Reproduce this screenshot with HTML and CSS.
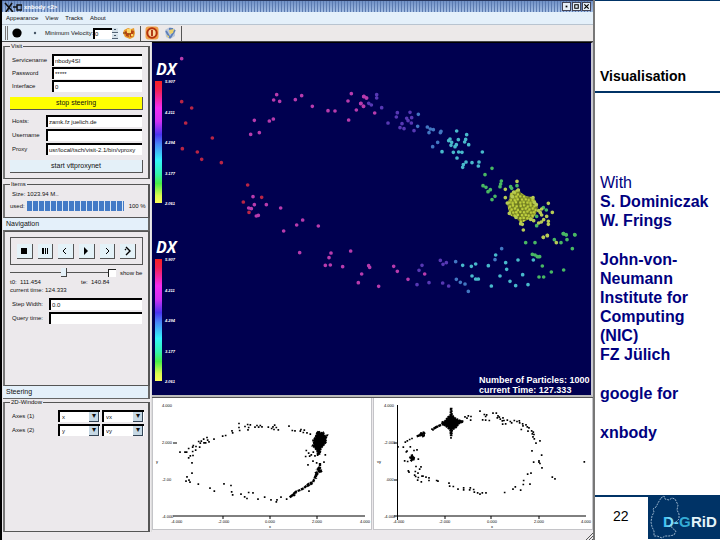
FILE: index.html
```html
<!DOCTYPE html>
<html lang="en">
<head>
<meta charset="utf-8">
<title>Visualisation</title>
<link rel="stylesheet" href="styles.css">
</head>
<body>
<div class="page">
<main class="app">
  <header class="titlebar">
    <svg class="title-icon" viewBox="0 0 18 10"><path d="M1 1L9 10M8 1L2 10" stroke="#111" stroke-width="1.6"/><path d="M9 5h4M13 3h5v5h-5z" stroke="#111" stroke-width="1.4" fill="none"/></svg>
    <h1 class="title">xnbody &lt;2&gt;</h1>
    <div class="win-buttons">
      <button type="button" aria-label="Minimise"><svg viewBox="0 0 8 8"><path d="M3 3h2v2H3z"/></svg></button>
      <button type="button" aria-label="Maximise"><svg viewBox="0 0 8 8"><path d="M2 2h4v4H2z" fill="none" stroke="#000" stroke-width="1.2"/></svg></button>
      <button type="button" aria-label="Close"><svg viewBox="0 0 8 8"><path d="M1.500 1.500l5 5M6.500 1.500l-5 5" stroke="#000" stroke-width="1.400"/></svg></button>
    </div>
  </header>
  <nav class="menubar"><a href="#">Appearance</a><a href="#">View</a><a href="#">Tracks</a><a href="#">About</a></nav>
  <div class="toolbar">
    <span class="grip"></span>
    <button type="button" class="tool" aria-label="Large points"><svg viewBox="0 0 14 14"><circle cx="7" cy="7" r="4.600"/></svg></button>
    <button type="button" class="tool dot" aria-label="Small points"><svg viewBox="0 0 14 14"><circle cx="7" cy="7" r="1.200" fill="#456"/></svg></button>
    <label for="vel">Minimum Velocity:</label>
    <input id="vel" class="spin" value="0">
    <span class="spinner"><i></i><i></i></span>
    <button type="button" class="tool" aria-label="Colours"><svg viewBox="0 0 14 14"><path d="M2 4l4-2 3 1 3-1 1 5-1 4-4 2-5-2-2-4z" fill="#e79a2c"/><path d="M3 5l3 1 1 5-3-1zM8 4l4 1-1 5-3 1z" fill="#b84312"/><path d="M5 3h4v4H5zM9 8h2v2H9z" fill="#fbd768"/><path d="M1 7h3M6 8h2" stroke="#70300c"/></svg></button>
    <span class="sep"></span>
    <button type="button" class="tool" aria-label="Power"><svg viewBox="0 0 14 14"><rect x="0.500" y="0.500" width="13" height="13" rx="3" fill="#efa24a"/><circle cx="7" cy="7" r="4.700" fill="#fbd8a0" stroke="#b5320d" stroke-width="2"/><path d="M7 4v6" stroke="#a92c0b" stroke-width="1.800"/></svg></button>
    <button type="button" class="tool" aria-label="Plot settings"><svg viewBox="0 0 14 14"><path d="M2 4l5-3 5 2v7l-5 3-4-2z" fill="#bac7dc"/><path d="M3 5l4 7M12 4l-5 8M6 3h4" stroke="#5d7fb8" stroke-width="1.800"/><path d="M6 4l5-1-1 4-3 1zM3 9l3 1v2z" fill="#ead06a"/></svg></button>
    <span class="sep"></span>
  </div>
  <div class="workspace">
    <aside class="side">
      <fieldset class="group visit">
        <legend>Visit</legend>
        <div class="row wide"><label for="svc">Servicename</label><input id="svc" value="nbody4SI"></div>
        <div class="row wide"><label for="pwd">Password</label><input id="pwd" value="*****"></div>
        <div class="row wide"><label for="ifc">Interface</label><input id="ifc" value="0"></div>
        <button type="button" class="action stop">stop steering</button>
        <div class="row"><label for="host">Hosts:</label><input id="host" value="zamk.fz juelich.de"></div>
        <div class="row"><label for="user">Username</label><input id="user" value=""></div>
        <div class="row"><label for="prox">Proxy</label><input id="prox" value="usr/local/tsch/visit-2.1/bin/vproxy"></div>
        <button type="button" class="action">start vttproxynet</button>
      </fieldset>
      <fieldset class="group items">
        <legend>Items</legend>
        <p>Size: 1023.94 M..</p>
        <div class="usage"><span>used:</span><span class="bar"></span><span>100 %</span></div>
      </fieldset>
      <h2 class="section">Navigation</h2>
      <section class="group navigation">
        <div class="player">
          <button type="button" aria-label="Stop"><svg viewBox="0 0 14 14"><path d="M4 4h6v6H4z"/></svg></button>
          <button type="button" aria-label="Pause"><svg viewBox="0 0 14 14"><path d="M4 4h2v6H4zM7 4h1v6H7zM9 4h1v6H9z"/></svg></button>
          <button type="button" aria-label="Back"><svg viewBox="0 0 14 14"><path d="M8 4L5 7l3 3" fill="none" stroke="#000"/></svg></button>
          <button type="button" aria-label="Play"><svg viewBox="0 0 14 14"><path d="M5 3l4 4-4 4z"/></svg></button>
          <button type="button" aria-label="Forward"><svg viewBox="0 0 14 14"><path d="M6 4l3 3-3 3" fill="none" stroke="#000"/></svg></button>
          <button type="button" aria-label="End"><svg viewBox="0 0 14 14"><path d="M6 3l4 4-4 4M5 5l1 1" fill="none" stroke="#000" stroke-width="1.400"/></svg></button>
        </div>
        <div class="slide-row"><input type="range" aria-label="Time" min="0" max="100" value="55"><input type="checkbox" id="be"><label for="be">show be</label></div>
        <div class="times"><span>t0:&nbsp; 111.454</span><span>te:&nbsp; 140.84</span></div>
        <p class="current">current time: 124.333</p>
        <div class="row"><label for="step">Step Width:</label><input id="step" value="0.0"></div>
        <div class="row"><label for="query">Query time:</label><input id="query" value=""></div>
      </section>
      <h2 class="section">Steering</h2>
      <fieldset class="group window2d">
        <legend>2D-Window</legend>
        <div class="axes"><label for="ax1">Axes (1)</label><span class="pick"><select id="ax1"><option>x</option></select></span><span class="pick"><select aria-label="Axes 1 second"><option>vx</option></select></span></div>
        <div class="axes"><label for="ax2">Axes (2)</label><span class="pick"><select id="ax2"><option>y</option></select></span><span class="pick"><select aria-label="Axes 2 second"><option>vy</option></select></span></div>
      </fieldset>
    </aside>
    <div class="views">
      <svg class="space" viewBox="152 44 439 352" role="img" aria-label="Particles">
        <defs>
          <linearGradient id="scale" x1="0" y1="0" x2="0" y2="1"><stop offset="0" stop-color="#f82020"/><stop offset=".07" stop-color="#f02050"/><stop offset=".22" stop-color="#f42cf0"/><stop offset=".33" stop-color="#d030f4"/><stop offset=".44" stop-color="#4a34f0"/><stop offset=".52" stop-color="#4888f8"/><stop offset=".65" stop-color="#34f4fa"/><stop offset=".76" stop-color="#34f4b0"/><stop offset=".84" stop-color="#48ee48"/><stop offset=".94" stop-color="#dcfa50"/><stop offset="1" stop-color="#fafc58"/></linearGradient>
          <pattern id="grain" width="53" height="47" patternUnits="userSpaceOnUse"><path fill="#6c7820" d="M0 0h53v47H0z"/><path d="M5 5h.1M15 3h.1M26 7h.1M35 4h.1M46 6h.1M10 14h.1M20 13h.1M31 16h.1M41 13h.1M50 17h.1M4 23h.1M15 24h.1M25 22h.1M36 25h.1M45 24h.1M9 33h.1M20 32h.1M29 34h.1M40 34h.1M49 32h.1M4 42h.1M14 41h.1M25 42h.1M34 43h.1M44 41h.1" stroke="#c2d23e" stroke-width="8" stroke-linecap="round"/></pattern>
        </defs>
        <path fill="#000050" d="M152 44h440v352H152z"/>
        <text class="dx" x="156" y="76">DX</text><text class="dx" x="156" y="254">DX</text>
        <path fill="url(#scale)" d="M155 82h7v122h-7z"/><path fill="url(#scale)" d="M155 260h7v122h-7z"/>
        <g class="tick"><text x="165" y="84">5.907</text><text x="165" y="115">4.211</text><text x="165" y="145">4.294</text><text x="165" y="176">3.177</text><text x="165" y="206">2.061</text><text x="165" y="262">5.907</text><text x="165" y="293">4.211</text><text x="165" y="323">4.294</text><text x="165" y="354">3.177</text><text x="165" y="384">2.061</text></g>
        <g class="dots" transform="translate(150 40) scale(.3333)">
          <path class="red" d="M95 188h.1M125 207h.1M107 252h.1M187 297h.1M142 339h.1M155 361h.1M214 371h.1M97 329h.1M293 438h.1M280 489h.1M297 520h.1M335 475h.1"/>
          <path class="pink" d="M95 59h.1M313 244h.1M302 286h.1M328 281h.1M358 246h.1M370 240h.1M371 183h.1M389 187h.1M380 167h.1M436 182h.1M455 170h.1M487 202h.1M534 215h.1M555 216h.1M309 473h.1M313 497h.1M296 507h.1M304 509h.1M349 497h.1M392 507h.1M319 531h.1M325 529h.1M604 164h.1M594 186h.1M642 172h.1M632 194h.1M641 202h.1M619 213h.1M596 243h.1M650 177h.1"/>
        </g>
        <g class="dots" transform="translate(150 210) scale(.3333)">
          <path class="pink" d="M458 33h.1M440 48h.1M505 51h.1M401 66h.1M449 131h.1M543 132h.1M537 146h.1M526 169h.1M541 168h.1M578 173h.1M602 126h.1M656 170h.1M659 175h.1M635 195h.1M625 221h.1M686 232h.1"/>
        </g>
        <g class="dots" transform="translate(360 80) scale(.3333)">
          <path class="pink" d="M11 53h.1M19 57h.1M3 73h.1M10 82h.1M44 102h.1"/>
          <path class="violet" d="M50 47h.1M50 57h.1M65 86h.1M26 73h.1M34 78h.1M84 132h.1M112 101h.1M109 114h.1M150 100h.1M140 118h.1M155 116h.1M144 125h.1M154 132h.1M126 134h.1M120 146h.1M132 149h.1M162 155h.1"/>
          <path class="blue" d="M175 106h.1M173 142h.1M202 144h.1M211 150h.1M220 152h.1M207 161h.1M243 157h.1M241 161h.1M233 190h.1M218 203h.1"/>
          <path class="cyan" d="M290 156h.1M320 167h.1M317 181h.1M314 189h.1M295 182h.1M270 180h.1M266 185h.1M275 190h.1M273 199h.1M289 197h.1M285 203h.1M326 197h.1M246 218h.1M280 220h.1M296 219h.1M306 220h.1M291 237h.1M367 219h.1M318 249h.1M310 257h.1M308 265h.1M336 251h.1M357 249h.1M355 261h.1"/>
          <path class="green" d="M396 268h.1M375 287h.1M424 306h.1M422 315h.1M420 323h.1M369 320h.1M378 325h.1M391 332h.1M384 338h.1M405 352h.1M396 362h.1M471 320h.1M452 323h.1M455 328h.1M550 386h.1M559 393h.1M530 412h.1M530 440h.1M610 464h.1M618 467h.1M644 467h.1"/>
          <path fill="url(#grain)" d="M450 342l12-5 12-10 9 14 17 11 18 2 10 12 6 20-6 18-10 16-16 3-10 5-10 4-13-14-17-8-7-18-4-20 7-13z"/>
          <path class="lime" d="M471 307h.1M436 331h.1M436 356h.1M461 339h.1M475 333h.1M442 372h.1M448 403h.1M482 434h.1M487 436h.1M490 453h.1M519 356h.1M529 377h.1M565 373h.1M577 400h.1M560 412h.1M565 427h.1M565 436h.1M551 422h.1M544 429h.1M536 432h.1M545 390h.1M541 401h.1M545 408h.1M536 395h.1M523 370h.1M468 415h.1M512 421h.1M521 425h.1M457 353h.1M550 475h.1M562 469h.1"/>
        </g>
        <g class="dots" transform="translate(380 200) scale(.3333)">
          <path class="pink" d="M41 202h.1M52 217h.1M84 241h.1M134 225h.1"/>
          <path class="violet" d="M126 199h.1M117 214h.1M147 251h.1M111 257h.1M181 184h.1M189 196h.1M199 191h.1M188 252h.1M206 261h.1"/>
          <path class="blue" d="M227 188h.1M229 241h.1M241 250h.1M255 255h.1M265 277h.1M365 149h.1M345 182h.1"/>
          <path class="cyan" d="M248 199h.1M274 202h.1M287 195h.1M276 231h.1M287 240h.1M295 240h.1M334 261h.1M325 200h.1M347 168h.1M377 191h.1M380 211h.1M360 231h.1M390 247h.1M407 260h.1M414 183h.1M428 227h.1M444 257h.1M460 183h.1"/>
          <path class="green" d="M437 131h.1M465 131h.1M457 166h.1M465 168h.1M472 173h.1M479 173h.1M487 201h.1M477 234h.1M491 234h.1M514 219h.1M551 213h.1M577 149h.1M523 122h.1M543 131h.1M561 122h.1M559 108h.1M550 104h.1M585 108h.1"/>
          <path class="lime" d="M490 115h.1M502 110h.1M529 131h.1"/>
        </g>
        <g class="readout"><text x="479" y="384">Number of Particles: 1000</text><text x="479" y="394">current Time: 127.333</text></g>
      </svg>
      <div class="plots">
        <svg viewBox="152 399 218 131" role="img" aria-label="Plot of x against y">
          <path d="M172 517h192M222 517v3M269 517v3M316 517v3M172 444h4" class="axis"/>
          <g class="num"><text x="161" y="408">4.000</text><text x="161" y="445">2.000</text><text x="161" y="482">-2.00</text><text x="161" y="519">-4.000</text><text x="170" y="524">-4.000</text><text x="217" y="524">-2.000</text><text x="264" y="524">0.000</text><text x="311" y="524">2.000</text><text x="359" y="524">4.000</text><text x="155" y="464">y</text><text x="268" y="529">x</text></g>
          <g class="marks" transform="translate(150 395) scale(.3333)">
            <path d="M264 86v5M264 98v5M282 95v5M290 89v5M293 98v5M298 90v5M291 105v5M312 97v5M318 92v5M323 97v5M328 92v5M333 96v5M352 97v5M362 101v5M366 96v5M371 91v5M369 104v5M376 98v5M382 105v5M414 94v5M424 107v5M432 108v5M448 109v5M450 104v5M457 113v5M460 106v5M468 114v5M478 118v5M266 107v5M243 108v5M245 114v5M224 122v5M215 124v5M189 133v5M174 141v5M168 128v5M170 136v5M158 133v5M151 139v5M148 145v5M143 140v5M159 144v5M164 144v5M146 157v5M127 152v5M135 155v5M125 157v5M134 166v5M125 170v5M113 161v5M102 172v5M107 172v5M87 172v5M126 182v5M118 183v5M113 189v5M123 204v5M123 235v5M108 246v5M105 259v5M114 256v5M117 262v5M142 268v5M177 280v5M190 289v5M219 267v5M240 272v5M242 291v5M245 300v5M270 298v5M281 306v5M288 311v5M293 293v5M306 294v5M321 313v5M341 307v5M360 315v5M376 321v5M378 315v5M390 307v5M407 313v5M474 289v5M471 210v5M464 185v5M466 167v5M523 180v5M519 202v5M473 175v5M481 180v5M487 172v5M476 184v5M486 199v5M497 204v5M492 183v5M500 181v5"/>
            <path class="cluster" d="M498 116l5-5 5 6 9-2 4 10 8-1-4 9 0 12-7 9-8 9-3 16-7 3-2-12-8-10-6-4 5-7-3-10 7-9z"/>
            <path class="trail" d="M416 310l8-7 6 0 5-10 13-5 10-5 8-7 9-8 11-3 7-18 15-18-13-4M420 308l13-14M492 238l20-10M502 218l10 17M495 240v14M485 267l-17 10M507 207v17"/>
          </g>
        </svg>
        <svg viewBox="373 399 218 131" role="img" aria-label="Plot of vx against vy">
          <path d="M396.500 406v111M393 444h4M393 481h4M393 517h192M396.500 517v4M444 517v3M490 517v3M538 517v3" class="axis"/>
          <g class="num"><text x="383" y="408">4.000</text><text x="383" y="445">-2.000</text><text x="385" y="482">.000</text><text x="383" y="519">-4.000</text><text x="392" y="524">-4.000</text><text x="438" y="524">-2.000</text><text x="486" y="524">0.000</text><text x="533" y="524">2.000</text><text x="580" y="524">4.000</text><text x="376" y="464">vy</text><text x="490" y="529">x</text></g>
          <g class="marks" transform="translate(370 395) scale(.3333)">
            <path d="M327 49v5M340 59v5M344 65v5M347 60v5M366 55v5M376 55v5M335 75v5M344 76v5M355 77v5M282 66v5M292 63v5M300 65v5M288 70v5M299 76v5M381 63v5M379 69v5M385 67v5M388 73v5M396 69v5M394 78v5M399 77v5M395 88v5M404 87v5M409 76v5M418 80v5M422 84v5M430 77v5M438 80v5M445 78v5M446 84v5M455 87v5M456 93v5M451 104v5M465 90v5M469 96v5M474 99v5M471 109v5M482 108v5M487 112v5M484 117v5M489 119v5M486 126v5M490 132v5M495 145v5M507 138v5M483 168v5M512 181v5M488 202v5M504 198v5M507 206v5M513 219v5M504 202v5M480 235v5M470 238v5M458 257v5M457 269v5M477 268v5M449 286v5M433 276v5M426 283v5M401 293v5M345 294v5M334 294v5M327 298v5M320 294v5M310 292v5M308 284v5M298 279v5M296 285v5M278 279v5M278 285v5M261 283v5M247 275v5M236 274v5M234 265v5M201 259v5M197 257v5M174 257v5M174 249v5M165 247v5M156 244v5M151 261v5M140 256v5M142 248v5M153 244v5M141 235v5M133 230v5M131 241v5M134 245v5M112 228v5M114 232v5M110 200v5M101 198v5M108 169v5M106 171v5M118 156v5M129 167v5M138 165v5M97 157v5M81 156v5M103 142v5M109 138v5M116 134v5M123 131v5M135 215v5M150 216v5M146 223v5M142 193v5M544 247v5M552 252v5M640 201v5M240 129v5M186 105v5M190 100v5M183 103v5"/>
            <path class="trail" d="M115 189l16 8M122 181l4 15M119 202l11-14M137 127l10-3 3-6 8-2 5 5M142 124h22M150 117l8 12M188 104l13-7M192 101l15-7 14-6M258 90l11-8 9 0"/>
            <path class="cluster" d="M239 44h3l1 19 8 8 12 7 14 5-13 6-9 12-11 6-2 17h-3l-2-16-8-8-10-7-8-8 11-4 8-11 8-7z"/>
          </g>
        </svg>
      </div>
    </div>
  </div>
  <footer class="status"><svg viewBox="0 0 8 8"><path d="M1 8l7-7M4 8l4-4M7 8l1-1" stroke="#555"/></svg></footer>
</main>
<aside class="slide">
  <h2 class="heading">Visualisation</h2>
  <div class="credits">
    <p>With<br><b>S. Dominiczak<br>W. Frings</b></p>
    <p><b>John-von-<br>Neumann<br>Institute for<br>Computing<br>(NIC)<br>FZ Jülich</b></p>
    <p><b>google for</b></p>
    <p><b>xnbody</b></p>
  </div>
  <div class="foot">
    <span class="number">22</span>
    <svg class="logo" viewBox="0 0 72 44" role="img" aria-label="D-Grid">
      <defs><linearGradient id="ice"><stop offset="0" stop-color="#28b8f0"/><stop offset=".5" stop-color="#8ce0fa"/><stop offset="1" stop-color="#5ccdf4"/></linearGradient></defs>
      <path fill="#003366" d="M0 0h72v44H0z"/>
      <path d="M13 3l3-2 1 3 4 1 3-2 3 1 3 6-1 5 2 4 0 5-3 3-5 2 1 4 4 3-2 4-5 1-4 0-3 2-5-2-3 0 0-5-2-4-1-5 1-6 2-4-1-3 3-2 2-4z" fill="none" stroke="#a9c1d6" stroke-width=".9" stroke-dasharray="2 1"/>
      <g class="brand"><text x="15" y="32" fill="url(#ice)">D-</text><text x="31" y="32" fill="#35acd6">G</text><text x="43" y="32" fill="#e4f4fa">RiD</text></g>
    </svg>
  </div>
</aside>
</div>
</body>
</html>
```
FILE: styles.css
```css
* { box-sizing: border-box; }
body { margin: 0; background: #fff; font-family: "Liberation Sans", Arial, sans-serif; }
h1, h2, p, fieldset { margin: 0; padding: 0; font-weight: normal; }
button, input, select { font: inherit; color: inherit; margin: 0; padding: 0; border: 0; border-radius: 0; }
svg { display: block; fill: #000; }
a { color: inherit; text-decoration: none; }

.page { display: grid; grid-template-columns: minmax(0, 1fr) 125px; min-height: 100vh; }
.app {
  display: flex; flex-direction: column; background: #ece9ec; color: #111;
  border-left: 2px solid #000; border-right: 2px solid #777;
  font-family: "Liberation Sans", Arial, sans-serif; font-size: 6px; line-height: 8px;
}
.titlebar {
  display: flex; align-items: center; gap: 2px; height: 12px; padding: 0 2px;
  border-top: 1px solid #27365c; color: #fff;
  background: repeating-linear-gradient(90deg, #5b7bb0 0 1px, transparent 1px 3px) 0 2px / 100% 3px, linear-gradient(#6f90c6, #a3bde2);
}
.title-icon { width: 18px; height: 10px; }
.title { flex: 1; font-size: 6px; font-weight: bold; }
.win-buttons { display: flex; gap: 1px; }
.win-buttons button { width: 9px; height: 9px; background: #e6eef6; border: 1px solid #445; }
.win-buttons svg { width: 7px; height: 7px; }
.menubar { display: flex; gap: 7px; height: 13px; padding: 2px 4px; background: #e4f0fa; border-bottom: 1px solid #b8c4d0; }
.toolbar { display: flex; align-items: center; height: 17px; padding-left: 3px; border-bottom: 1px solid #444; background: linear-gradient(90deg, #e6f1f8 120px, #ece9e9 136px); }
.grip { width: 3px; height: 14px; border: solid #777; border-width: 0 1px; }
.tool { width: 18px; height: 14px; background: none; display: flex; justify-content: center; }
.tool svg { width: 14px; height: 14px; }
.toolbar label { margin-left: 1px; width: 48px; white-space: nowrap; }
.spin { width: 19px; height: 11px; border: solid #000; border-width: 2px 0 0 2px; background: #fff; }
.spinner { display: grid; gap: 1px; margin-right: 2px; }
.spinner i { width: 6px; height: 5px; background: linear-gradient(#456, #456) center / 2px 1px no-repeat #d4e0e8; border-bottom: 1px solid #567; }
.sep { width: 1px; height: 15px; margin: 0 2px; background: #555; }

.workspace { display: grid; grid-template-columns: 149px minmax(0, 1fr); flex: 1; }
.side { display: flex; flex-direction: column; padding: 1px 1px 0; }
.group { border: 1px solid #555; border-width: 1px 2px; border-left-color: #777; min-width: 0; }
legend { margin-left: 5px; padding: 0 1px; line-height: 6px; }
.row { display: grid; grid-template-columns: 34px 1fr; align-items: center; height: 12px; margin: 0 6px 2px 7px; }
.row.wide { grid-template-columns: 40px 1fr; margin-bottom: 1px; }
.row input { width: 100%; height: 12px; padding-left: 1px; background: #fff; border: solid #000; border-width: 2px 0 0 2px; }
.row label { white-space: nowrap; }
.visit { padding-top: 5px; padding-bottom: 5px; }
.action { display: block; width: calc(100% - 10px); height: 13px; margin: 5px; font-size: 7px; line-height: 10px; background: #e4f0f8; border: solid #555; border-width: 0 1px 1px 0; }
.action.stop { background: #ff0; }
.visit .action:last-child { margin-bottom: 0; }
.items { margin-top: 2px; height: 37px; }
.items p { margin: 3px 7px; }
.usage { display: flex; gap: 2px; padding-left: 5px; align-items: center; white-space: nowrap; }
.bar { width: 97px; height: 10px; background: repeating-linear-gradient(90deg, #447bc6 0 5px, #dceaf6 5px 6px); margin-right: 3px; }
.section { height: 13px; padding: 2px 3px; font-size: 7px; line-height: 8px; background: #e4f0fa; border: solid #666; border-width: 0 2px 1px 0; }
.navigation { padding-top: 5px; height: 155px; }
.player { display: flex; gap: 5px; margin: 0 5px; height: 28px; padding: 6px; border: 1px solid #555; }
.player button { width: 16px; height: 15px; background: #e4f2f8; border: solid #555; border-width: 0 1px 1px 0; }
.player svg { width: 14px; height: 14px; }
.slide-row { display: flex; align-items: center; margin: 2px 5px 1px; height: 11px; white-space: nowrap; }
input[type=range] { appearance: none; flex: none; width: 98px; height: 9px; background: linear-gradient(#555, #555) center / 100% 1px no-repeat; }
input[type=range]::-webkit-slider-thumb { appearance: none; width: 6px; height: 9px; background: #e4f0f8; border: solid #444; border-width: 0 1px 1px 0; }
input[type=checkbox] { appearance: none; flex: none; width: 8px; height: 8px; background: #fff; border: solid #222; border-width: 1px 0 0 1px; margin-right: 4px; }
.times { display: grid; grid-template-columns: 71px 1fr; margin: 0 5px; line-height: 7px; }
.current { margin: 0 5px 4px; line-height: 8px; }
.navigation .row { grid-template-columns: 37px 1fr; }
.window2d { flex: 1; }
.axes { display: grid; grid-template-columns: 44px 42px 42px; gap: 0 2px; align-items: center; height: 12px; margin: 5px 0 0 7px; }
.axes + .axes { margin-top: 2px; }
.pick { position: relative; height: 12px; }
.pick select { appearance: none; width: 100%; height: 12px; padding-left: 2px; background: #fff; border: solid #000; border-width: 2px 0 0 2px; }
.pick::after { content: "▾"; position: absolute; right: 1px; top: 2px; width: 9px; height: 9px; font-size: 8px; line-height: 8px; text-align: center; background: #c6d8e4; border: solid #345; border-width: 0 1px 1px 0; pointer-events: none; }

.views { display: flex; flex-direction: column; border-left: 1px solid #ddd; }
.space { width: 100%; border-top: 1px solid #000; border-bottom: 2px solid #bbb; border-right: 2px solid #c8c8d0; }
.dx { font: italic bold 16px "Open Sans", sans-serif; fill: #fff; }
.tick { font: italic bold 4px "Liberation Sans", sans-serif; fill: #fff; }
.readout { font: bold 9px "Liberation Sans", sans-serif; fill: #fff; }
.dots path { stroke-width: 11; stroke-linecap: round; }
.dots .red { stroke: #b92545; }
.dots .pink { stroke: #b83bad; }
.dots .violet { stroke: #5738b4; }
.dots .blue { stroke: #4277c2; }
.dots .cyan { stroke: #48b9cb; }
.dots .green { stroke: #48b763; }
.dots .lime { stroke: #b6cb55; }
.dots path[fill] { stroke: none; }
.plots { display: grid; grid-template-columns: 1fr 1fr; gap: 1px; border-top: 1px solid #555; }
.plots svg { width: 100%; background: #fff; border: solid #c4c4c8; border-width: 0 1px 1px; }
.axis { stroke: #000; fill: none; }
.num { font: 4px "Liberation Sans", sans-serif; }
.marks path { stroke: #000; stroke-width: 5; fill: none; }
.marks .cluster { fill: #000; stroke-dasharray: 6 2; }
.marks .trail { stroke-width: 7; stroke-dasharray: 9 2; }
.status { display: flex; justify-content: flex-end; align-items: flex-end; height: 8px; }
.status svg { width: 8px; height: 8px; }

.slide { display: flex; flex-direction: column; }
.heading { padding: 66px 0 0 5px; height: 93px; border-top: 1px solid #036; border-bottom: 2px solid #036; color: #000; font-size: 14px; font-weight: bold; line-height: 18px; }
.credits { flex: 1; padding: 80px 0 0 5px; font-size: 16px; line-height: 19px; color: #000080; }
.credits p { margin-bottom: 20px; }
.foot { display: grid; grid-template-columns: 53px 72px; height: 45px; }
.number { border-top: 2px solid #036; padding: 10px 0 0 18px; font-size: 14px; line-height: 18px; }
.logo { width: 72px; height: 44px; }
.brand { font: bold 15px "Liberation Sans", sans-serif; }
```
